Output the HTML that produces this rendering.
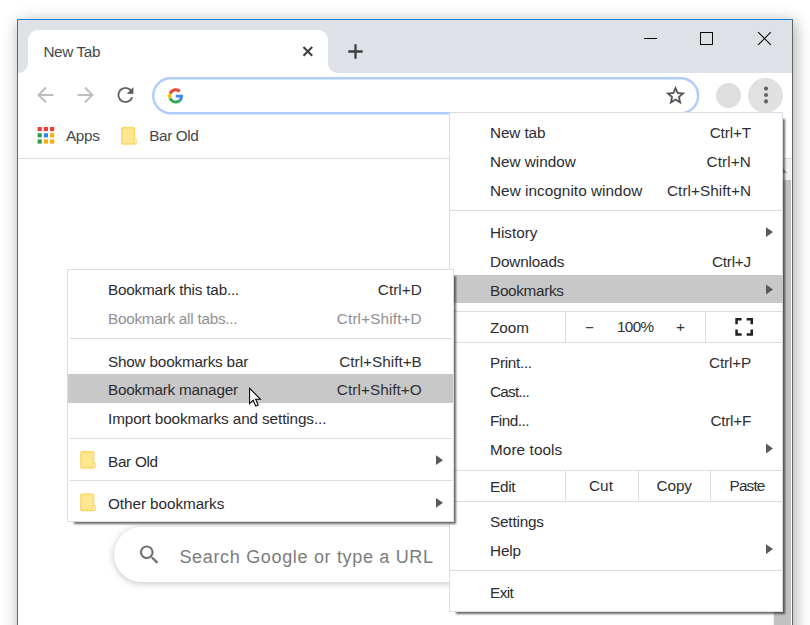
<!DOCTYPE html>
<html lang="en">
<head>
<meta charset="utf-8">
<title>New Tab</title>
<style>
html,body{margin:0;padding:0;}
html{width:810px;height:625px;overflow:hidden;background:#fff;}
body{width:810px;height:625px;background:#fff;position:relative;overflow:hidden;font-family:"Liberation Sans",sans-serif;}
.a{position:absolute;display:block;}
.tx{position:absolute;white-space:nowrap;font-family:"Liberation Sans",sans-serif;}
svg{display:block;overflow:visible;}
body>svg{position:absolute;left:0;top:0;pointer-events:none;}
.hs{background:#dcdde3;height:1px;}
.vs{background:#dcdde3;width:1px;}
</style>
</head>
<body>

<!-- ===== window frame ===== -->
<div class="a" id="winshadow" style="left:17px;top:19px;width:776px;height:640px;box-shadow:2px 3px 15px rgba(0,0,0,.34);background:#fff;"></div>
<div class="a" id="frame" style="left:17px;top:19px;width:774px;height:640px;border-left:1px solid #666;border-right:1px solid #666;border-top:1px solid #1883d7;background:#fff;"></div>
<div class="a" id="titlebar" style="left:18px;top:20px;width:774px;height:52.6px;background:#dee1e6;"></div>

<!-- tab -->
<div class="a" id="tab" style="left:28px;top:30px;width:300px;height:43px;background:#fff;border-radius:10px 10px 0 0;"></div>
<div class="a" style="left:18px;top:62.6px;width:10px;height:10px;background:radial-gradient(circle at 0 0,#dee1e6 9.6px,#fff 10.4px);"></div>
<div class="a" style="left:328px;top:62.6px;width:10px;height:10px;background:radial-gradient(circle at 100% 0,#dee1e6 9.6px,#fff 10.4px);"></div>
<!-- tab close -->
<svg class="ov" width="810" height="625" viewBox="0 0 810 625"><svg x="302.4" y="46" width="10.9" height="10.9" viewBox="0 0 10 10" overflow="visible"><path d="M1 1L9 9M9 1L1 9" stroke="#3c4043" stroke-width="1.9" fill="none"/></svg></svg>
<!-- new tab plus -->
<svg class="ov" width="810" height="625" viewBox="0 0 810 625"><svg x="348" y="44" width="15" height="15" viewBox="0 0 15 15" overflow="visible"><path d="M7.5 0.3V14.7M0.3 7.5H14.7" stroke="#3c4043" stroke-width="2.3" fill="none"/></svg></svg>

<!-- window controls -->
<div class="a" style="left:644px;top:38px;width:13px;height:1px;background:#0a0a0a;"></div>
<div class="a" style="left:700px;top:32px;width:11px;height:11px;border:1px solid #0a0a0a;"></div>
<svg class="ov" width="810" height="625" viewBox="0 0 810 625"><svg x="758" y="32" width="13" height="13" viewBox="0 0 13 13" overflow="visible"><path d="M0.2 0.2L12.8 12.8M12.8 0.2L0.2 12.8" stroke="#0a0a0a" stroke-width="1.15" fill="none"/></svg></svg>

<!-- ===== toolbar ===== -->
<!-- back -->
<svg class="ov" width="810" height="625" viewBox="0 0 810 625"><svg x="33" y="82.7" width="24.4" height="24.4" viewBox="0 0 24 24" overflow="visible"><path fill="#bcbec1" d="M20 11H7.83l5.59-5.59L12 4l-8 8 8 8 1.41-1.41L7.83 13H20v-2z"/></svg></svg>
<!-- forward -->
<svg class="ov" width="810" height="625" viewBox="0 0 810 625"><svg x="73.5" y="82.7" width="24.4" height="24.4" viewBox="0 0 24 24" overflow="visible"><path fill="#bcbec1" d="M4 11h12.17l-5.59-5.59L12 4l8 8-8 8-1.41-1.41L16.17 13H4v-2z"/></svg></svg>
<!-- reload -->
<svg class="ov" width="810" height="625" viewBox="0 0 810 625"><svg x="113.5" y="83" width="24" height="24" viewBox="0 0 24 24" overflow="visible"><path fill="#55585d" stroke="#fff" stroke-width="0.3" d="M17.65 6.35C16.2 4.9 14.21 4 12 4c-4.42 0-7.99 3.58-7.99 8s3.57 8 7.99 8c3.73 0 6.84-2.55 7.73-6h-2.08c-.82 2.33-3.04 4-5.65 4-3.31 0-6-2.69-6-6s2.69-6 6-6c1.66 0 3.14.69 4.22 1.78L13 11h7V4l-2.35 2.35z"/></svg></svg>

<!-- omnibox -->
<svg id="omni" width="810" height="130" viewBox="0 0 810 130"><rect x="153.25" y="78.3" width="544.9" height="34.95" rx="17.45" fill="#fff" stroke="#b1cdfb" stroke-width="2.5"/></svg>
<svg class="ov" width="810" height="625" viewBox="0 0 810 625"><svg x="168.1" y="88.2" width="15.2" height="15.5" viewBox="0 0 48 48" overflow="visible">
<path fill="#EA4335" d="M24 9.5c3.54 0 6.71 1.22 9.21 3.6l6.85-6.85C35.9 2.38 30.47 0 24 0 14.62 0 6.51 5.38 2.56 13.22l7.98 6.19C12.43 13.72 17.74 9.5 24 9.5z"/>
<path fill="#4285F4" d="M46.98 24.55c0-1.57-.15-3.09-.38-4.55H24v9.02h12.94c-.58 2.96-2.26 5.48-4.78 7.18l7.73 6c4.51-4.18 7.09-10.36 7.09-17.65z"/>
<path fill="#FBBC05" d="M10.53 28.59c-.48-1.45-.76-2.99-.76-4.59s.27-3.14.76-4.59l-7.98-6.19C.92 16.46 0 20.12 0 24c0 3.88.92 7.54 2.56 10.78l7.97-6.19z"/>
<path fill="#34A853" d="M24 48c6.48 0 11.93-2.13 15.89-5.81l-7.73-6c-2.15 1.45-4.92 2.3-8.16 2.3-6.26 0-11.57-4.22-13.47-9.91l-7.98 6.19C6.51 42.62 14.62 48 24 48z"/>
</svg></svg>
<!-- star -->
<svg class="ov" width="810" height="625" viewBox="0 0 810 625"><svg x="664.3" y="84.3" width="22.4" height="22.4" viewBox="0 0 24 24" overflow="visible"><path fill="#4f5256" stroke="#4f5256" stroke-width="0.35" stroke-linejoin="round" d="M22 9.24l-7.19-.62L12 2 9.19 8.63 2 9.24l5.46 4.73L5.82 21 12 17.27 18.18 21l-1.63-7.03L22 9.24zM12 15.4l-3.76 2.27 1-4.28-3.32-2.88 4.38-.38L12 6.1l1.71 4.04 4.38.38-3.32 2.88 1 4.28L12 15.4z"/></svg></svg>
<!-- avatar -->
<div class="a" style="left:715.5px;top:82.5px;width:25.8px;height:25.8px;border-radius:50%;background:#dedede;"></div>
<!-- menu button -->
<div class="a" style="left:747.9px;top:77.8px;width:35px;height:35px;border-radius:50%;background:#e1e1e1;"></div>
<svg class="ov" width="810" height="625" viewBox="0 0 810 625"><svg x="760" y="80" width="12" height="30" viewBox="0 0 12 30" overflow="visible"><circle cx="6" cy="8.6" r="2.05" fill="#5f6368"/><circle cx="6" cy="15" r="2.05" fill="#5f6368"/><circle cx="6" cy="21.4" r="2.05" fill="#5f6368"/></svg></svg>

<!-- ===== bookmarks bar ===== -->
<svg class="ov" width="810" height="625" viewBox="0 0 810 625"><svg x="37.6" y="127" width="16.6" height="16.6" viewBox="0 0 16 16" overflow="visible">
<rect x="0" y="0" width="4" height="4" fill="#f33b36"/><rect x="6" y="0" width="4" height="4" fill="#f33b36"/><rect x="12" y="0" width="4" height="4" fill="#f33b36"/>
<rect x="0" y="6" width="4" height="4" fill="#2e9c4b"/><rect x="6" y="6" width="4" height="4" fill="#2a86f3"/><rect x="12" y="6" width="4" height="4" fill="#f9ab06"/>
<rect x="0" y="12" width="4" height="4" fill="#2e9c4b"/><rect x="6" y="12" width="4" height="4" fill="#f9ab06"/><rect x="12" y="12" width="4" height="4" fill="#f9ab06"/>
</svg></svg>
<!-- folder icon bookmark bar -->
<svg class="ov" width="810" height="625" viewBox="0 0 810 625"><svg x="121.1" y="127.05" width="16" height="18" viewBox="0 0 16 18" overflow="visible"><rect x="0.75" y="0.75" width="12.6" height="16.1" rx="0.7" fill="#ffe792" stroke="#fcd85f" stroke-width="1.5"/><rect x="12.75" y="11.7" width="2.3" height="5.2" rx="0.9" fill="#fffbe8" stroke="#fcd85f" stroke-width="1.2"/></svg></svg>
<div class="a hs" style="left:18px;top:158px;width:774px;background:#dcdce2;"></div>

<!-- scrollbar -->
<div class="a" style="left:773px;top:159px;width:18px;height:470px;background:#f1f1f1;"></div>
<div class="a" style="left:774.4px;top:180px;width:17px;height:450px;background:#c1c1c1;"></div>
<svg class="ov" width="810" height="625" viewBox="0 0 810 625"><svg x="777" y="167" width="10" height="6" viewBox="0 0 10 6" overflow="visible"><path d="M0 6L5 0L10 6z" fill="#a3a3a3"/></svg></svg>

<!-- ===== NTP search box ===== -->
<div class="a" style="left:114.2px;top:527px;width:520px;height:54.6px;border-radius:28px;background:#fff;box-shadow:0 1.25px 7.5px rgba(32,33,36,.28);"></div>
<svg class="ov" width="810" height="625" viewBox="0 0 810 625"><svg x="136.9" y="542.3" width="25" height="25" viewBox="0 0 24 24" overflow="visible"><path fill="#6f6f6f" d="M15.5 14h-.79l-.28-.27C15.41 12.59 16 11.11 16 9.5 16 5.91 13.09 3 9.5 3S3 5.91 3 9.5 5.91 16 9.5 16c1.61 0 3.09-.59 4.23-1.57l.27.28v.79l5 4.99L20.49 19l-4.99-5zm-6 0C7.01 14 5 11.99 5 9.5S7.01 5 9.5 5 14 7.01 14 9.5 11.99 14 9.5 14z"/></svg></svg>

<!-- ===== main menu ===== -->
<div class="a" id="menu" style="left:449px;top:112px;width:332px;height:498px;background:#fff;border:1px solid #dcdde4;box-shadow:4.5px 4.5px 2px -2.5px rgba(0,0,0,.58);"></div>
<div class="a" style="left:450px;top:275px;width:333px;height:28px;background:#c8c8c8;"></div>
<div class="a hs" style="left:450px;top:210px;width:332px;"></div>
<div class="a hs" style="left:450px;top:311px;width:332px;"></div>
<div class="a hs" style="left:450px;top:342px;width:332px;"></div>
<div class="a hs" style="left:450px;top:470px;width:332px;"></div>
<div class="a hs" style="left:450px;top:501px;width:332px;"></div>
<div class="a hs" style="left:450px;top:570px;width:332px;"></div>
<div class="a vs" style="left:565.2px;top:312px;height:30px;"></div>
<div class="a vs" style="left:705.4px;top:312px;height:30px;"></div>
<div class="a vs" style="left:565.2px;top:471px;height:29px;"></div>
<div class="a vs" style="left:638.2px;top:471px;height:29px;"></div>
<div class="a vs" style="left:710.3px;top:471px;height:29px;"></div>
<!-- submenu arrows -->
<svg class="ov" width="810" height="625" viewBox="0 0 810 625"><svg x="766" y="227" width="8" height="12" viewBox="0 0 8 12" overflow="visible"><path d="M0 0.15L7 5.05L0 9.95z" fill="#5a5a5e"/></svg></svg>
<svg class="ov" width="810" height="625" viewBox="0 0 810 625"><svg x="766" y="284" width="8" height="12" viewBox="0 0 8 12" overflow="visible"><path d="M0 0.60L7 5.50L0 10.40z" fill="#5a5a5e"/></svg></svg>
<svg class="ov" width="810" height="625" viewBox="0 0 810 625"><svg x="766" y="443" width="8" height="12" viewBox="0 0 8 12" overflow="visible"><path d="M0 0.60L7 5.50L0 10.40z" fill="#5a5a5e"/></svg></svg>
<svg class="ov" width="810" height="625" viewBox="0 0 810 625"><svg x="766" y="544" width="8" height="12" viewBox="0 0 8 12" overflow="visible"><path d="M0 0.20L7 5.10L0 10.00z" fill="#5a5a5e"/></svg></svg>
<!-- fullscreen icon -->
<svg class="ov" width="810" height="625" viewBox="0 0 810 625"><svg x="735.3" y="318" width="17.7" height="17.7" viewBox="0 0 14 14" overflow="visible"><path fill="#1f2227" d="M2 9H0v5h5v-2H2V9zM0 5h2V2h3V0H0v5zm12 7H9v2h5V9h-2v3zM9 0v2h3v3h2V0H9z"/></svg></svg>

<!-- ===== bookmarks submenu ===== -->
<div class="a" id="submenu" style="left:67px;top:269px;width:385px;height:251px;background:#fff;border:1px solid #dcdde4;box-shadow:4.5px 4.5px 2px -2.5px rgba(0,0,0,.58);"></div>
<div class="a" style="left:68px;top:374.2px;width:385px;height:28.4px;background:#c8c8c8;"></div>
<div class="a hs" style="left:69.5px;top:338px;width:382px;"></div>
<div class="a hs" style="left:69.5px;top:438px;width:382px;"></div>
<div class="a hs" style="left:69.5px;top:480px;width:382px;"></div>
<svg class="ov" width="810" height="625" viewBox="0 0 810 625"><svg x="436" y="455" width="8" height="12" viewBox="0 0 8 12" overflow="visible"><path d="M0 0.30L7 5.20L0 10.10z" fill="#5a5a5e"/></svg></svg>
<svg class="ov" width="810" height="625" viewBox="0 0 810 625"><svg x="436" y="497" width="8" height="12" viewBox="0 0 8 12" overflow="visible"><path d="M0 0.90L7 5.80L0 10.70z" fill="#5a5a5e"/></svg></svg>
<svg class="ov" width="810" height="625" viewBox="0 0 810 625"><svg x="80.2" y="451.1" width="16" height="18" viewBox="0 0 16 18" overflow="visible"><rect x="0.75" y="0.75" width="12.6" height="16.1" rx="0.7" fill="#ffe792" stroke="#fcd85f" stroke-width="1.5"/><rect x="12.75" y="11.7" width="2.3" height="5.2" rx="0.9" fill="#fffbe8" stroke="#fcd85f" stroke-width="1.2"/></svg></svg>
<svg class="ov" width="810" height="625" viewBox="0 0 810 625"><svg x="80.2" y="493.6" width="16" height="18" viewBox="0 0 16 18" overflow="visible"><rect x="0.75" y="0.75" width="12.6" height="16.1" rx="0.7" fill="#ffe792" stroke="#fcd85f" stroke-width="1.5"/><rect x="12.75" y="11.7" width="2.3" height="5.2" rx="0.9" fill="#fffbe8" stroke="#fcd85f" stroke-width="1.2"/></svg></svg>

<!-- ===== text ===== -->
<span class="tx" id="t0" style="left:490.00px;top:123.00px;font-size:15.3px;line-height:20px;color:#2c2c30;letter-spacing:-0.118px;">New tab</span>
<span class="tx" id="t1" style="left:490.00px;top:152.00px;font-size:15.3px;line-height:20px;color:#2c2c30;letter-spacing:-0.008px;">New window</span>
<span class="tx" id="t2" style="left:490.00px;top:181.00px;font-size:15.3px;line-height:20px;color:#2c2c30;letter-spacing:0.047px;">New incognito window</span>
<span class="tx" id="t3" style="left:490.00px;top:223.00px;font-size:15.3px;line-height:20px;color:#2c2c30;letter-spacing:-0.042px;">History</span>
<span class="tx" id="t4" style="left:490.00px;top:252.00px;font-size:15.3px;line-height:20px;color:#2c2c30;letter-spacing:-0.154px;">Downloads</span>
<span class="tx" id="t5" style="left:490.00px;top:281.00px;font-size:15.3px;line-height:20px;color:#2c2c30;letter-spacing:-0.324px;">Bookmarks</span>
<span class="tx" id="t6" style="left:490.00px;top:318.00px;font-size:15.3px;line-height:20px;color:#2c2c30;letter-spacing:-0.077px;">Zoom</span>
<span class="tx" id="t7" style="left:490.00px;top:353.00px;font-size:15.3px;line-height:20px;color:#2c2c30;letter-spacing:-0.300px;">Print...</span>
<span class="tx" id="t8" style="left:490.00px;top:382.00px;font-size:15.3px;line-height:20px;color:#2c2c30;letter-spacing:-0.729px;">Cast...</span>
<span class="tx" id="t9" style="left:490.00px;top:411.00px;font-size:15.3px;line-height:20px;color:#2c2c30;letter-spacing:-0.488px;">Find...</span>
<span class="tx" id="t10" style="left:490.00px;top:440.00px;font-size:15.3px;line-height:20px;color:#2c2c30;letter-spacing:0.088px;">More tools</span>
<span class="tx" id="t11" style="left:490.00px;top:477.00px;font-size:15.3px;line-height:20px;color:#2c2c30;letter-spacing:-0.265px;">Edit</span>
<span class="tx" id="t12" style="left:490.00px;top:512.00px;font-size:15.3px;line-height:20px;color:#2c2c30;letter-spacing:-0.185px;">Settings</span>
<span class="tx" id="t13" style="left:490.00px;top:541.00px;font-size:15.3px;line-height:20px;color:#2c2c30;letter-spacing:-0.142px;">Help</span>
<span class="tx" id="t14" style="left:490.00px;top:583.00px;font-size:15.3px;line-height:20px;color:#2c2c30;letter-spacing:-0.550px;">Exit</span>
<span class="tx" id="t15" style="right:59.00px;top:123.00px;font-size:15.3px;line-height:20px;color:#303034;letter-spacing:-0.130px;">Ctrl+T</span>
<span class="tx" id="t16" style="right:59.00px;top:152.00px;font-size:15.3px;line-height:20px;color:#303034;letter-spacing:0.120px;">Ctrl+N</span>
<span class="tx" id="t17" style="right:59.00px;top:181.00px;font-size:15.3px;line-height:20px;color:#303034;letter-spacing:0.057px;">Ctrl+Shift+N</span>
<span class="tx" id="t18" style="right:59.00px;top:252.00px;font-size:15.3px;line-height:20px;color:#303034;letter-spacing:-0.229px;">Ctrl+J</span>
<span class="tx" id="t19" style="right:59.00px;top:353.00px;font-size:15.3px;line-height:20px;color:#303034;letter-spacing:-0.156px;">Ctrl+P</span>
<span class="tx" id="t20" style="right:59.00px;top:411.00px;font-size:15.3px;line-height:20px;color:#303034;letter-spacing:-0.263px;">Ctrl+F</span>
<span class="tx" id="t21" style="left:585.00px;top:318.00px;font-size:15.3px;line-height:20px;color:#303034;letter-spacing:0.363px;">−</span>
<span class="tx" id="t22" style="left:616.90px;top:317.00px;font-size:15.3px;line-height:20px;color:#303034;letter-spacing:-0.631px;">100%</span>
<span class="tx" id="t23" style="left:676.00px;top:317.00px;font-size:15.3px;line-height:20px;color:#303034;letter-spacing:0.863px;">+</span>
<span class="tx" id="t24" style="left:589.00px;top:476.00px;font-size:15.3px;line-height:20px;color:#303034;letter-spacing:0.062px;">Cut</span>
<span class="tx" id="t25" style="left:656.60px;top:476.00px;font-size:15.3px;line-height:20px;color:#303034;letter-spacing:-0.105px;">Copy</span>
<span class="tx" id="t26" style="left:729.50px;top:476.00px;font-size:15.3px;line-height:20px;color:#303034;letter-spacing:-0.825px;">Paste</span>
<span class="tx" id="t27" style="left:108.00px;top:280.00px;font-size:15.3px;line-height:20px;color:#2c2c30;letter-spacing:-0.204px;">Bookmark this tab...</span>
<span class="tx" id="t28" style="left:108.00px;top:309.00px;font-size:15.3px;line-height:20px;color:#909094;letter-spacing:-0.251px;">Bookmark all tabs...</span>
<span class="tx" id="t29" style="left:108.00px;top:352.00px;font-size:15.3px;line-height:20px;color:#2c2c30;letter-spacing:-0.199px;">Show bookmarks bar</span>
<span class="tx" id="t30" style="left:108.00px;top:380.00px;font-size:15.3px;line-height:20px;color:#2c2c30;letter-spacing:-0.230px;">Bookmark manager</span>
<span class="tx" id="t31" style="left:108.00px;top:409.00px;font-size:15.3px;line-height:20px;color:#2c2c30;letter-spacing:-0.113px;">Import bookmarks and settings...</span>
<span class="tx" id="t32" style="left:108.00px;top:452.00px;font-size:15.3px;line-height:20px;color:#2c2c30;letter-spacing:-0.294px;">Bar Old</span>
<span class="tx" id="t33" style="left:108.00px;top:494.00px;font-size:15.3px;line-height:20px;color:#2c2c30;letter-spacing:-0.069px;">Other bookmarks</span>
<span class="tx" id="t34" style="right:388.20px;top:280.00px;font-size:15.3px;line-height:20px;color:#303034;letter-spacing:0.036px;">Ctrl+D</span>
<span class="tx" id="t35" style="right:388.20px;top:309.00px;font-size:15.3px;line-height:20px;color:#909094;letter-spacing:0.141px;">Ctrl+Shift+D</span>
<span class="tx" id="t36" style="right:388.20px;top:352.00px;font-size:15.3px;line-height:20px;color:#303034;letter-spacing:0.003px;">Ctrl+Shift+B</span>
<span class="tx" id="t37" style="right:388.20px;top:380.00px;font-size:15.3px;line-height:20px;color:#303034;letter-spacing:0.069px;">Ctrl+Shift+O</span>
<span class="tx" id="t38" style="left:43.40px;top:42.00px;font-size:15.3px;line-height:20px;color:#45484c;letter-spacing:-0.364px;">New Tab</span>
<span class="tx" id="t39" style="left:66.00px;top:126.00px;font-size:15.3px;line-height:20px;color:#45484c;letter-spacing:-0.344px;">Apps</span>
<span class="tx" id="t40" style="left:149.30px;top:126.00px;font-size:15.3px;line-height:20px;color:#45484c;letter-spacing:-0.394px;">Bar Old</span>
<span class="tx" id="t41" style="left:179.40px;top:543.00px;font-size:18px;line-height:28px;color:#7c7c7c;letter-spacing:0.673px;">Search Google or type a URL</span>

<!-- mouse cursor -->
<svg class="ov" width="810" height="625" viewBox="0 0 810 625"><svg x="249" y="387.6" width="12.5" height="19.2" viewBox="0 0 13 20" overflow="visible"><path d="M0.6 0.8V16.6L4.3 13.1L7 19.2L9.6 18.1L6.9 12.2H11.9z" fill="#fff" stroke="#000" stroke-width="1.1" stroke-linejoin="miter"/></svg></svg>

</body>
</html>
